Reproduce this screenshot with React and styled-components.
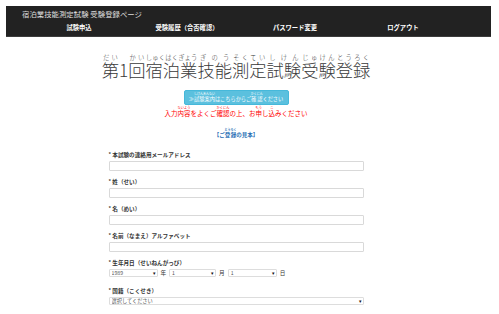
import React from 'react';
import styled, { createGlobalStyle } from 'styled-components';

const GlobalStyle = createGlobalStyle`
  *, *::before, *::after { box-sizing: border-box; }
  html, body { margin: 0; padding: 0; background: #fff; }
  body {
    font-family: "Noto Sans CJK JP", "Noto Sans", sans-serif;
    color: #333;
  }
`;

const navItems = ['試験申込', '受験履歴（合否確認）', 'パスワード変更', 'ログアウト'];

const fields = [
  '本試験の連絡用メールアドレス',
  '姓（せい）',
  '名（めい）',
  '名前（なまえ）アルファベット',
];

const R = ({ base, ruby, size }) => (
  <ruby>
    {base}
    <Rt $size={size}>{ruby}</Rt>
  </ruby>
);

const Select = ({ value, width }) => (
  <SelectWrap style={{ width }}>
    <NativeSelect defaultValue={value}>
      <option>{value}</option>
    </NativeSelect>
    <Arrow>▾</Arrow>
  </SelectWrap>
);

const App = () => {
  return (
    <>
      <GlobalStyle />
      <Header>
        <SiteTitle>宿泊業技能測定試験 受験登録ページ</SiteTitle>
        <Nav>
          {navItems.map((item) => (
            <NavItem key={item}>{item}</NavItem>
          ))}
        </Nav>
      </Header>
      <Main>
        <PageTitle>
          <R base="第" ruby="だい" size={6.3} />1
          <R base="回" ruby="かい" size={6.3} />
          <R base="宿泊業" ruby="しゅくはくぎょう" size={6.3} />
          <R base="技能" ruby="ぎのう" size={6.3} />
          <R base="測定" ruby="そくてい" size={6.3} />
          <R base="試験" ruby="しけん" size={6.3} />
          <R base="受験" ruby="じゅけん" size={6.3} />
          <R base="登録" ruby="とうろく" size={6.3} />
        </PageTitle>
        <InfoButton type="button">
          ≫<R base="試験案内" ruby="しけんあんない" size={3} />はこちらからご
          <R base="確認" ruby="かくにん" size={3} />ください
        </InfoButton>
        <Notice>
          入力<R base="内容" ruby="ないよう" size={3.2} />をよくご
          <R base="確認" ruby="かくにん" size={3.2} />の上、お
          <R base="申" ruby="もう" size={3.2} />し
          <R base="込" ruby="こ" size={3.2} />みください
        </Notice>
        <SampleLink>
          【ご<R base="登録" ruby="とうろく" size={3} />の見本】
        </SampleLink>
        <Form>
          {fields.map((f) => (
            <Field key={f}>
              <Label><Req>*</Req> {f}</Label>
              <TextInput type="text" />
            </Field>
          ))}
          <Field $gap={10}>
            <Label><Req>*</Req> 生年月日（せいねんがっぴ）</Label>
            <DateRow>
              <Select value="1989" width="49px" />
              <Unit>年</Unit>
              <Select value="1" width="47px" />
              <Unit>月</Unit>
              <Select value="1" width="49px" />
              <Unit>日</Unit>
            </DateRow>
          </Field>
          <Field>
            <Label><Req>*</Req> 国籍（こくせき）</Label>
            <Select value="選択してください" width="100%" />
          </Field>
        </Form>
      </Main>
    </>
  );
};

export default App;

const Header = styled.header`
  margin: 6px 8px 0 6px;
  height: 31px;
  padding-top: 3px;
  background: #222;
  border-bottom: 1px solid #3c3c3c;
`;

const SiteTitle = styled.div`
  padding-left: 16px;
  font-family: "Liberation Serif", "Noto Sans CJK JP", serif;
  font-size: 7.4px;
  line-height: 11px;
  color: #ddd;
`;

const Nav = styled.nav`
  display: grid;
  grid-template-columns: repeat(4, 108px);
  margin: 3px 0 0 19px;
`;

const NavItem = styled.a`
  text-align: center;
  font-size: 6.3px;
  line-height: 9px;
  font-weight: bold;
  color: #fff;
`;

const Main = styled.main`
  display: flex;
  flex-direction: column;
  align-items: center;
  padding-right: 27px;
`;

const Rt = styled.rt`
  font-size: ${(p) => p.$size}px;
  line-height: 1;
`;

const PageTitle = styled.h1`
  margin: 17px 0 0;
  font-size: 17.3px;
  font-weight: 300;
  line-height: 20px;
  color: #3a3a3a;
  white-space: nowrap;
`;

const InfoButton = styled.button`
  width: 105px;
  height: 15px;
  margin-top: 10px;
  padding: 2px 0 0;
  background: #5bc0de;
  border: 1px solid #46b8da;
  border-radius: 2px;
  color: #fff;
  font-family: inherit;
  font-size: 5.2px;
  line-height: 8px;
  text-align: center;
`;

const Notice = styled.p`
  margin: 1px 0 0;
  color: #f00;
  font-size: 6.5px;
  line-height: 10px;
`;

const SampleLink = styled.a`
  margin-top: 10px;
  color: #2a6fb5;
  font-size: 5.5px;
  line-height: 8px;
  font-weight: bold;
`;

const Form = styled.form`
  width: 255px;
  margin-top: 12px;
`;

const Field = styled.div`
  margin-bottom: ${(p) => (p.$gap ?? 7)}px;
`;

const Label = styled.label`
  display: block;
  margin-bottom: 2px;
  font-size: 5.6px;
  line-height: 8px;
  font-weight: bold;
  color: #333;
`;

const Req = styled.span`
  position: relative;
  top: -1px;
  font-size: 5px;
`;

const TextInput = styled.input`
  display: block;
  width: 100%;
  height: 10px;
  margin-top: 1px;
  border: 1px solid #d9d9d9;
  border-radius: 1px;
  background: #fff;
  padding: 0;
`;

const DateRow = styled.div`
  display: flex;
  align-items: center;
`;

const SelectWrap = styled.span`
  position: relative;
  display: block;
`;

const NativeSelect = styled.select`
  appearance: none;
  display: block;
  width: 100%;
  height: 8px;
  padding: 0 0 0 2px;
  border: 1px solid #ddd;
  border-radius: 1px;
  background: #fff;
  font-family: inherit;
  font-size: 5.2px;
  line-height: 6px;
  color: #555;
`;

const Arrow = styled.span`
  position: absolute;
  right: 2px;
  top: 0;
  font-size: 5px;
  line-height: 8px;
  color: #111;
`;

const Unit = styled.span`
  margin: 0 3px 0 3px;
  font-size: 5.6px;
  line-height: 8px;
  color: #333;
`;
